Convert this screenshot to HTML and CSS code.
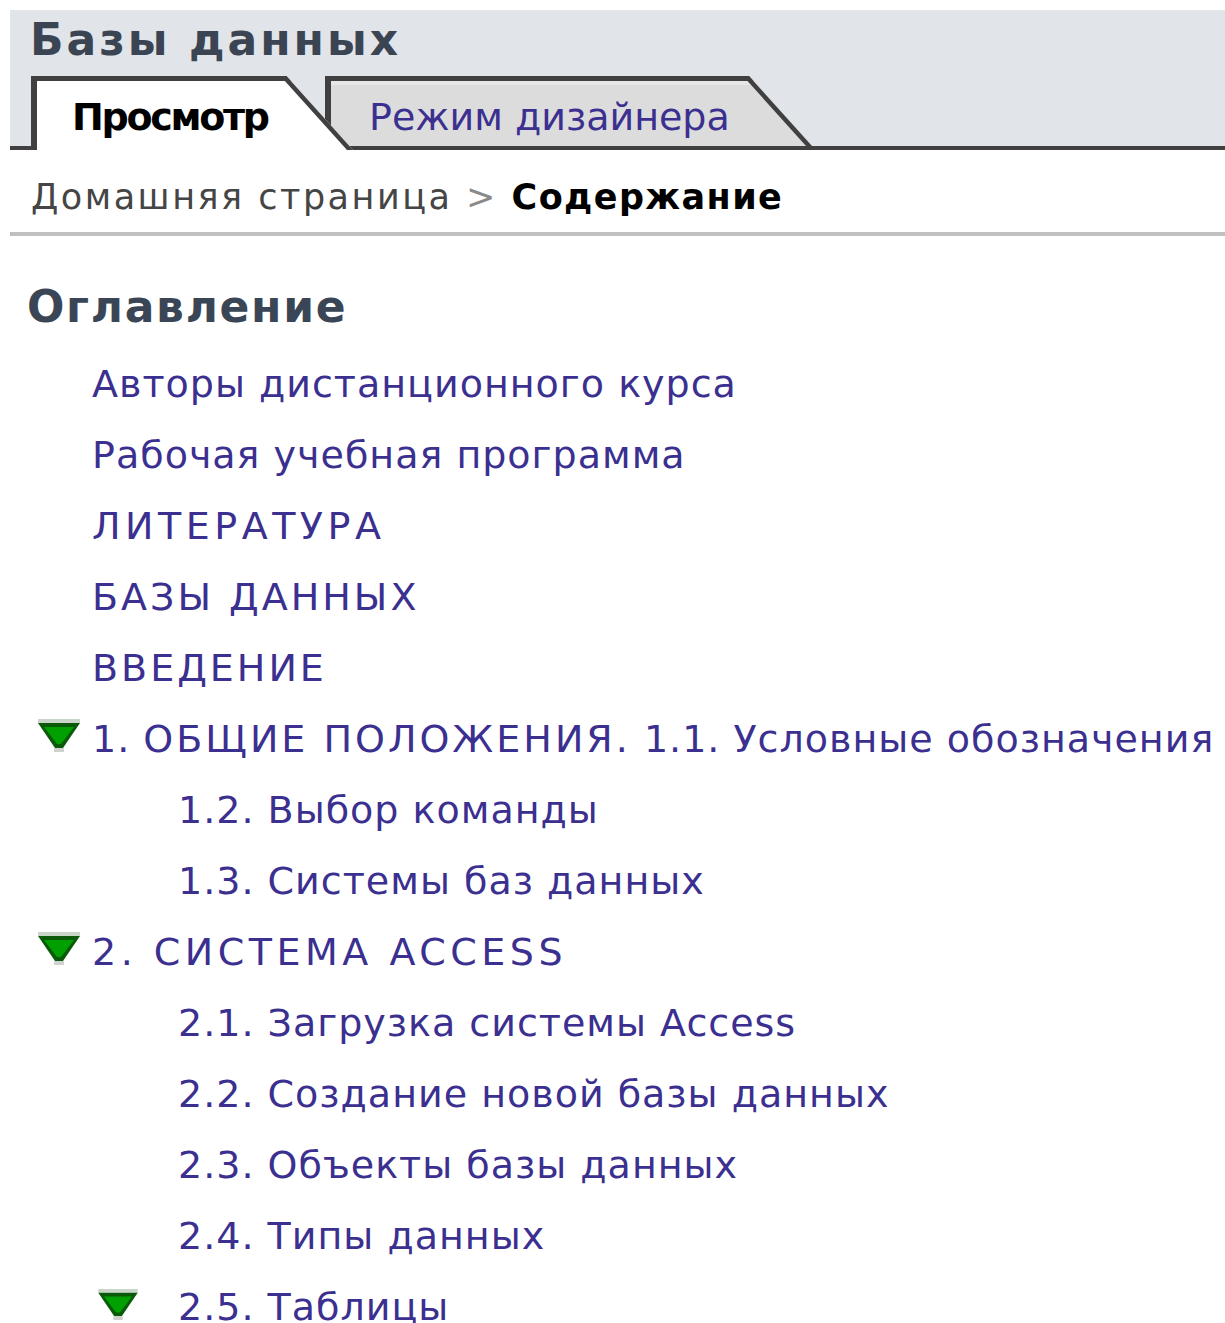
FILE: index.html
```html
<!DOCTYPE html>
<html lang="ru">
<head>
<meta charset="utf-8">
<title>Базы данных</title>
<link rel="stylesheet" href="styles.css">
</head>
<body>
<div class="page">
  <header class="site-header">
    <h1 class="site-title">Базы данных</h1>
    <nav class="tabs">
      <a class="tab tab-active" href="#">Просмотр</a>
      <a class="tab" href="#">Режим дизайнера</a>
    </nav>
  </header>

  <div class="breadcrumb">
    <a class="crumb" href="#">Домашняя страница</a> <span class="crumb-sep">&gt;</span> <span class="crumb-current">Содержание</span>
  </div>

  <section class="toc">
    <h2 class="toc-title">Оглавление</h2>
    <ul class="toc-list">
      <li class="lvl1"><a href="#">Авторы дистанционного курса</a></li>
      <li class="lvl1"><a href="#">Рабочая учебная программа</a></li>
      <li class="lvl1"><a class="caps-wide" href="#">ЛИТЕРАТУРА</a></li>
      <li class="lvl1"><a class="caps" href="#">БАЗЫ ДАННЫХ</a></li>
      <li class="lvl1"><a class="caps" href="#">ВВЕДЕНИЕ</a></li>
      <li class="lvl1"><span class="toggle"><svg viewBox="0 0 42 33" width="42" height="33"><rect x="0" y="0" width="42" height="4" fill="#c9d5c9"/><polygon points="0,4 42,4 25,29 17,29" fill="#0a5a0a"/><polygon points="6,8 36,8 23,25 19,25" fill="#00a000"/><rect x="16" y="29" width="10" height="4" fill="#cfd2cf"/></svg></span><a href="#">1. <span class="caps">ОБЩИЕ ПОЛОЖЕНИЯ.</span> 1.1. Условные обозначения</a></li>
      <li class="lvl2"><a href="#">1.2. Выбор команды</a></li>
      <li class="lvl2"><a href="#">1.3. Системы баз данных</a></li>
      <li class="lvl1"><span class="toggle"><svg viewBox="0 0 42 33" width="42" height="33"><rect x="0" y="0" width="42" height="4" fill="#c9d5c9"/><polygon points="0,4 42,4 25,29 17,29" fill="#0a5a0a"/><polygon points="6,8 36,8 23,25 19,25" fill="#00a000"/><rect x="16" y="29" width="10" height="4" fill="#cfd2cf"/></svg></span><a class="caps-wide" href="#">2. СИСТЕМА ACCESS</a></li>
      <li class="lvl2"><a href="#">2.1. Загрузка системы Access</a></li>
      <li class="lvl2"><a href="#">2.2. Создание новой базы данных</a></li>
      <li class="lvl2"><a href="#">2.3. Объекты базы данных</a></li>
      <li class="lvl2"><a href="#">2.4. Типы данных</a></li>
      <li class="lvl2"><span class="toggle"><svg viewBox="0 0 42 33" width="40" height="31"><rect x="0" y="0" width="42" height="4" fill="#c9d5c9"/><polygon points="0,4 42,4 25,29 17,29" fill="#0a5a0a"/><polygon points="6,8 36,8 23,25 19,25" fill="#00a000"/><rect x="16" y="29" width="10" height="4" fill="#cfd2cf"/></svg></span><a href="#">2.5. Таблицы</a></li>
    </ul>
  </section>
</div>
</body>
</html>
```

FILE: styles.css
```css
* {
  box-sizing: border-box;
}

html,
body {
  margin: 0;
  padding: 0;
}

body {
  background: #ffffff;
  font-family: "DejaVu Sans", Verdana, sans-serif;
  padding: 10px 0 0 10px;
}

a {
  text-decoration: none;
}

/* Grey page header with the site title and the view tabs */
.site-header {
  background: #e1e4e8;
  padding-top: 5px;
}

.site-title {
  margin: 0;
  padding-left: 20px;
  font-size: 44px;
  line-height: 50px;
  font-weight: bold;
  letter-spacing: 3px;
  color: #3a4452;
  white-space: nowrap;
}

.tabs {
  display: flex;
  align-items: flex-end;
  height: 74px;
  margin-top: 11px;
  padding-left: 21px;
  border-bottom: 4px solid #404040;
}

/* Each tab: a straight left part plus a slanted right part */
.tab {
  position: relative;
  z-index: 1;
  display: block;
  width: 487px;
  height: 70px;
  margin-left: -28px;
  padding: 18px 0 0 44px;
  font-size: 38px;
  line-height: 46px;
  color: #3b3090;
  white-space: nowrap;
}

.tab::before,
.tab::after {
  content: "";
  position: absolute;
  top: 0;
  bottom: 0;
  z-index: -1;
  background: #dcdcdc;
  border-top: 5px solid #404040;
  box-shadow: inset 0 4px 0 #e7e7e7;
}

.tab::before {
  left: 40%;
  right: 0;
  border-right: 6px solid #404040;
  transform: skewX(42deg);
  transform-origin: 0 100%;
}

.tab::after {
  left: 0;
  width: 60%;
  border-left: 6px solid #404040;
}

.tab-active {
  z-index: 2;
  width: 322px;
  height: 74px;
  margin-left: 0;
  margin-bottom: -4px;
  padding-left: 41px;
  font-weight: bold;
  letter-spacing: -2.3px;
  color: #000000;
}

.tab-active::before,
.tab-active::after {
  background: #ffffff;
  box-shadow: none;
}

/* Breadcrumb line */
.breadcrumb {
  padding: 27px 0 15px 21px;
  font-size: 35px;
  line-height: 40px;
  letter-spacing: 2.5px;
  border-bottom: 4px solid #c0c0c0;
  white-space: nowrap;
}

.crumb {
  color: #454545;
}

.crumb-sep {
  color: #8a8a8a;
}

.crumb-current {
  font-weight: bold;
  letter-spacing: 1.4px;
  color: #000000;
}

/* Table of contents */
.toc-title {
  margin: 46px 0 0 17px;
  font-size: 44px;
  line-height: 50px;
  font-weight: bold;
  letter-spacing: 1.7px;
  color: #3a4656;
}

.toc-list {
  list-style: none;
  margin: 17px 0 0;
  padding: 0;
}

.toc-list li {
  display: flex;
  align-items: baseline;
  font-size: 38px;
  line-height: 71px;
  letter-spacing: 1px;
  white-space: nowrap;
}

.toc-list a {
  color: #3b3090;
}

/* Upper-case headings run wider than the mixed-case ones */
.caps {
  letter-spacing: 3px;
}

.caps-wide {
  letter-spacing: 4.5px;
}

.lvl1 {
  padding-left: 82px;
}

.lvl2 {
  padding-left: 168px;
}

.toggle {
  display: block;
  flex: none;
  margin-bottom: -2px;
  line-height: 0;
}

.toggle svg {
  display: block;
}

.lvl1 .toggle {
  width: 42px;
  margin-left: -54px;
  margin-right: 12px;
}

.lvl2 .toggle {
  width: 40px;
  margin-left: -80px;
  margin-right: 40px;
}
```
